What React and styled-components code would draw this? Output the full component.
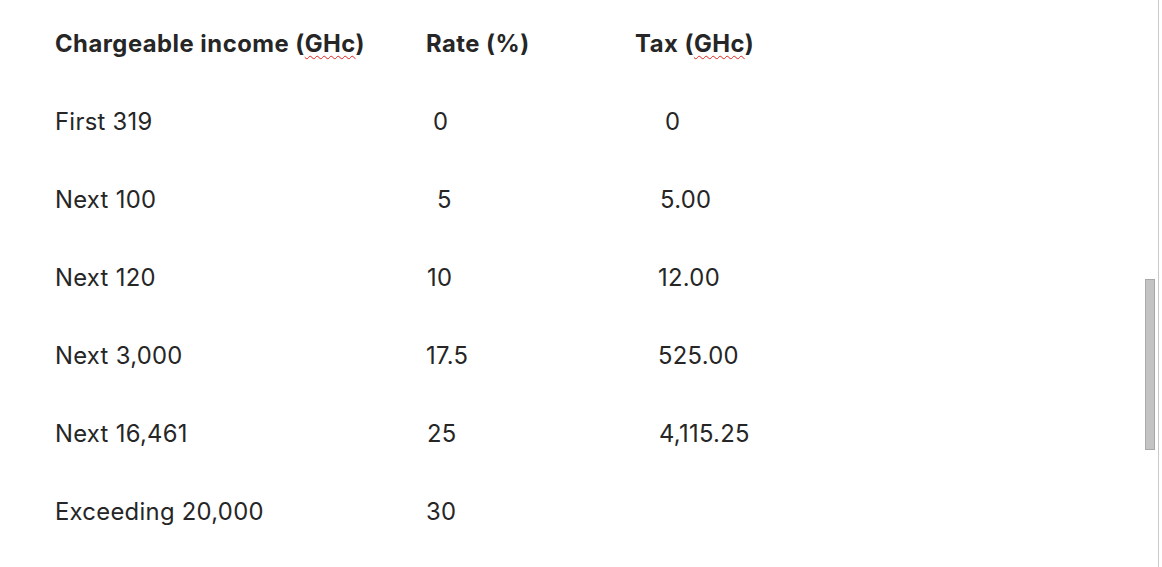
import React from "react";
import styled, { createGlobalStyle } from "styled-components";

const rows = [
  { income: "First 319", rate: "0", rateIndent: 7, tax: "0", taxIndent: 30 },
  { income: "Next 100", rate: "5", rateIndent: 11, tax: "5.00", taxIndent: 25 },
  { income: "Next 120", rate: "10", rateIndent: 1, tax: "12.00", taxIndent: 23 },
  { income: "Next 3,000", rate: "17.5", rateIndent: 0, tax: "525.00", taxIndent: 23 },
  { income: "Next 16,461", rate: "25", rateIndent: 1, tax: "4,115.25", taxIndent: 24 },
  { income: "Exceeding 20,000", rate: "30", rateIndent: 0, tax: "", taxIndent: 0 },
];

export default function App() {
  return (
    <>
      <GlobalStyle />
      <Page>
        <Table>
          <HeadCell>
            Chargeable income (<Squiggle>GHc</Squiggle>)
          </HeadCell>
          <HeadCell>Rate (%)</HeadCell>
          <HeadCell>
            Tax (<Squiggle>GHc</Squiggle>)
          </HeadCell>
          {rows.map((r) => (
            <React.Fragment key={r.income}>
              <Cell>{r.income}</Cell>
              <Cell $indent={r.rateIndent}>{r.rate}</Cell>
              <Cell $indent={r.taxIndent}>{r.tax}</Cell>
            </React.Fragment>
          ))}
        </Table>
        <Scrollbar>
          <Thumb />
        </Scrollbar>
      </Page>
    </>
  );
}

const GlobalStyle = createGlobalStyle`
  html, body {
    margin: 0;
    padding: 0;
    background: #fff;
  }
  body {
    font-family: Inter, "Liberation Sans", sans-serif;
    color: #262626;
  }
`;

const Page = styled.div`
  display: flex;
  width: 1162px;
  height: 567px;
  overflow: hidden;
`;

const Table = styled.div`
  flex: 1;
  display: grid;
  grid-template-columns: 371px 209px 1fr;
  grid-auto-rows: 78px;
  align-items: center;
  padding: 5px 0 0 55px;
`;

const Cell = styled.div`
  font-size: 23.8px;
  font-weight: 400;
  letter-spacing: 0.3px;
  line-height: 1.2;
  padding-left: ${(p) => p.$indent || 0}px;
  white-space: nowrap;
`;

const HeadCell = styled(Cell)`
  font-weight: 700;
  letter-spacing: 0.5px;
`;

const Squiggle = styled.span`
  text-decoration: underline wavy #e0241a;
  text-decoration-thickness: 1px;
  text-underline-offset: 3px;
`;

const Scrollbar = styled.div`
  width: 16px;
  flex: none;
  margin-right: 3px;
  position: relative;
  border-right: 1px solid #c9c9c9;
`;

const Thumb = styled.div`
  position: absolute;
  left: 3px;
  top: 279px;
  width: 8px;
  height: 169px;
  background: #c3c3c3;
  border: 1px solid #a9a9a9;
`;
